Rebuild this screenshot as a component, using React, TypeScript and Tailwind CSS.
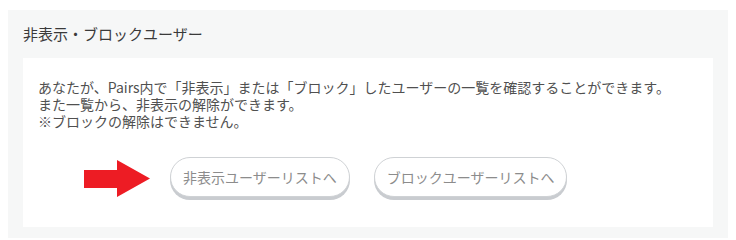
import React from "react";

export default function App() {
  const jp = { fontFamily: '"Noto Sans CJK JP", "Noto Sans", sans-serif' };
  return (
    <div className="w-[736px] h-[238px] bg-white pt-[10px] px-[8px] overflow-hidden" style={jp}>
      <div className="bg-[#f6f7f7] px-[15px] pb-[11px]">
        <div className="h-[48px] flex items-center text-[15px] text-[#3a3a3a]">非表示・ブロックユーザー</div>
        <div className="bg-white h-[169px] pl-[15px] pt-[21px]">
          <div className="text-[14px] leading-[17px] text-[#505050]">
            <p>あなたが、Pairs内で「非表示」または「ブロック」したユーザーの一覧を確認することができます。</p>
            <p>また一覧から、非表示の解除ができます。</p>
            <p>※ブロックの解除はできません。</p>
          </div>
          <div className="mt-[27px] ml-[46px] flex items-center">
            <svg width="66" height="37" viewBox="0 0 66 37" className="mt-[2px]">
              <polygon points="0,10 33,10 33,0 66,18.5 33,37 33,28 0,28" fill="#ed1c24" />
            </svg>
            <button className="ml-[20px] h-[40px] px-[12px] rounded-full border border-[#cfd2d5] bg-white text-[14px] text-[#8c8c8c] shadow-[0_3px_0_#c9ccd0]">
              非表示ユーザーリストへ
            </button>
            <button className="ml-[24px] h-[40px] px-[12px] rounded-full border border-[#cfd2d5] bg-white text-[14px] text-[#8c8c8c] shadow-[0_3px_0_#c9ccd0]">
              ブロックユーザーリストへ
            </button>
          </div>
        </div>
      </div>
    </div>
  );
}
